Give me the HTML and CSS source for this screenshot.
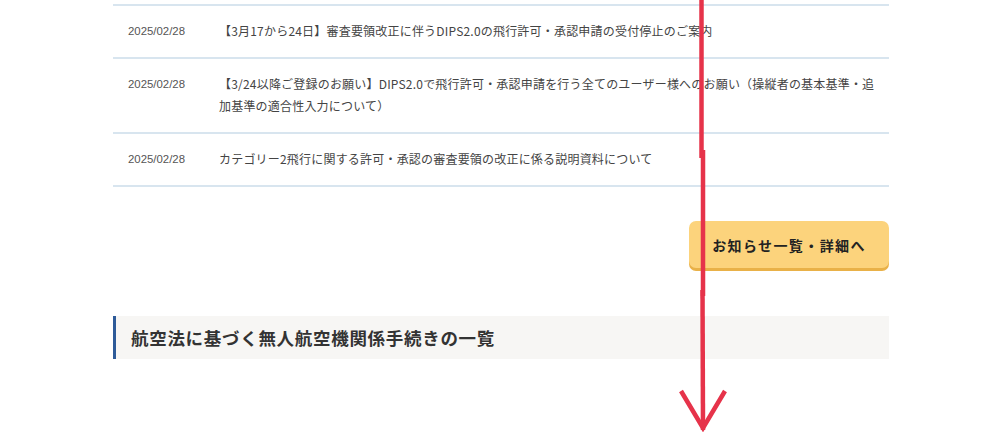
FILE: index.html
```html
<!DOCTYPE html>
<html lang="ja">
<head>
<meta charset="utf-8">
<link rel="stylesheet" href="styles.css">
</head>
<body>
<main class="wrap">
  <ul class="news">
    <li class="news-row">
      <span class="news-date">2025/02/28</span>
      <span class="news-title">【3月17から24日】審査要領改正に伴うDIPS2.0の飛行許可・承認申請の受付停止のご案内</span>
    </li>
    <li class="news-row">
      <span class="news-date">2025/02/28</span>
      <span class="news-title">【3/24以降ご登録のお願い】DIPS2.0で飛行許可・承認申請を行う全てのユーザー様へのお願い（操縦者の基本基準・追加基準の適合性入力について）</span>
    </li>
    <li class="news-row">
      <span class="news-date">2025/02/28</span>
      <span class="news-title">カテゴリー2飛行に関する許可・承認の審査要領の改正に係る説明資料について</span>
    </li>
  </ul>
  <div class="more">
    <a class="more-btn" href="#">お知らせ一覧・詳細へ</a>
  </div>
  <h2 class="section-title">航空法に基づく無人航空機関係手続きの一覧</h2>
</main>
<svg class="arrow" width="1000" height="432" viewBox="0 0 1000 432">
  <g stroke="#e6334a" stroke-width="4.5" fill="none" stroke-linecap="butt">
    <line x1="701.5" y1="0" x2="701.5" y2="158"/>
    <line x1="703" y1="150" x2="703" y2="296"/>
    <line x1="702.5" y1="290" x2="703" y2="430"/>
    <polyline points="681,391 703,428 725,391"/>
  </g>
</svg>
</body>
</html>
```

FILE: styles.css
```css
html, body {
  margin: 0;
  padding: 0;
  background: #ffffff;
}
body {
  font-family: "Noto Sans CJK JP", "Noto Sans", sans-serif;
  color: #444;
  position: relative;
  height: 432px;
  overflow: hidden;
}
.wrap {
  width: 776px;
  margin: 0 0 0 113px;
  padding-top: 4px;
}
.news {
  list-style: none;
  margin: 0;
  padding: 0;
  border-top: 2px solid #d8e5ef;
}
.news-row {
  display: flex;
  align-items: flex-start;
  padding: 14px 8px 15px 15px;
  border-bottom: 2px solid #d8e5ef;
  line-height: 22px;
}
.news-date {
  flex: 0 0 91px;
  font-size: 11.4px;
  color: #555;
  font-family: "Liberation Sans", "Noto Sans CJK JP", sans-serif;
}
.news-title {
  flex: 1;
  font-size: 12px;
  letter-spacing: 0.2px;
  color: #444;
}
.more {
  display: flex;
  justify-content: flex-end;
  margin-top: 34px;
}
.more-btn {
  display: flex;
  align-items: center;
  justify-content: center;
  width: 200px;
  height: 47px;
  background: #fcd37c;
  border-radius: 7px;
  box-shadow: 0 3px 0 #e9b148;
  color: #222;
  font-weight: 700;
  font-size: 14px;
  letter-spacing: 0.1em;
  text-decoration: none;
}
.section-title {
  margin: 48px 0 0 0;
  height: 43px;
  display: flex;
  align-items: center;
  padding-left: 15px;
  background: #f7f6f4;
  border-left: 3px solid #2e5b99;
  font-size: 17.5px;
  font-weight: 700;
  color: #333;
  letter-spacing: 0.04em;
}
.arrow {
  position: absolute;
  left: 0;
  top: 0;
  pointer-events: none;
}
```
